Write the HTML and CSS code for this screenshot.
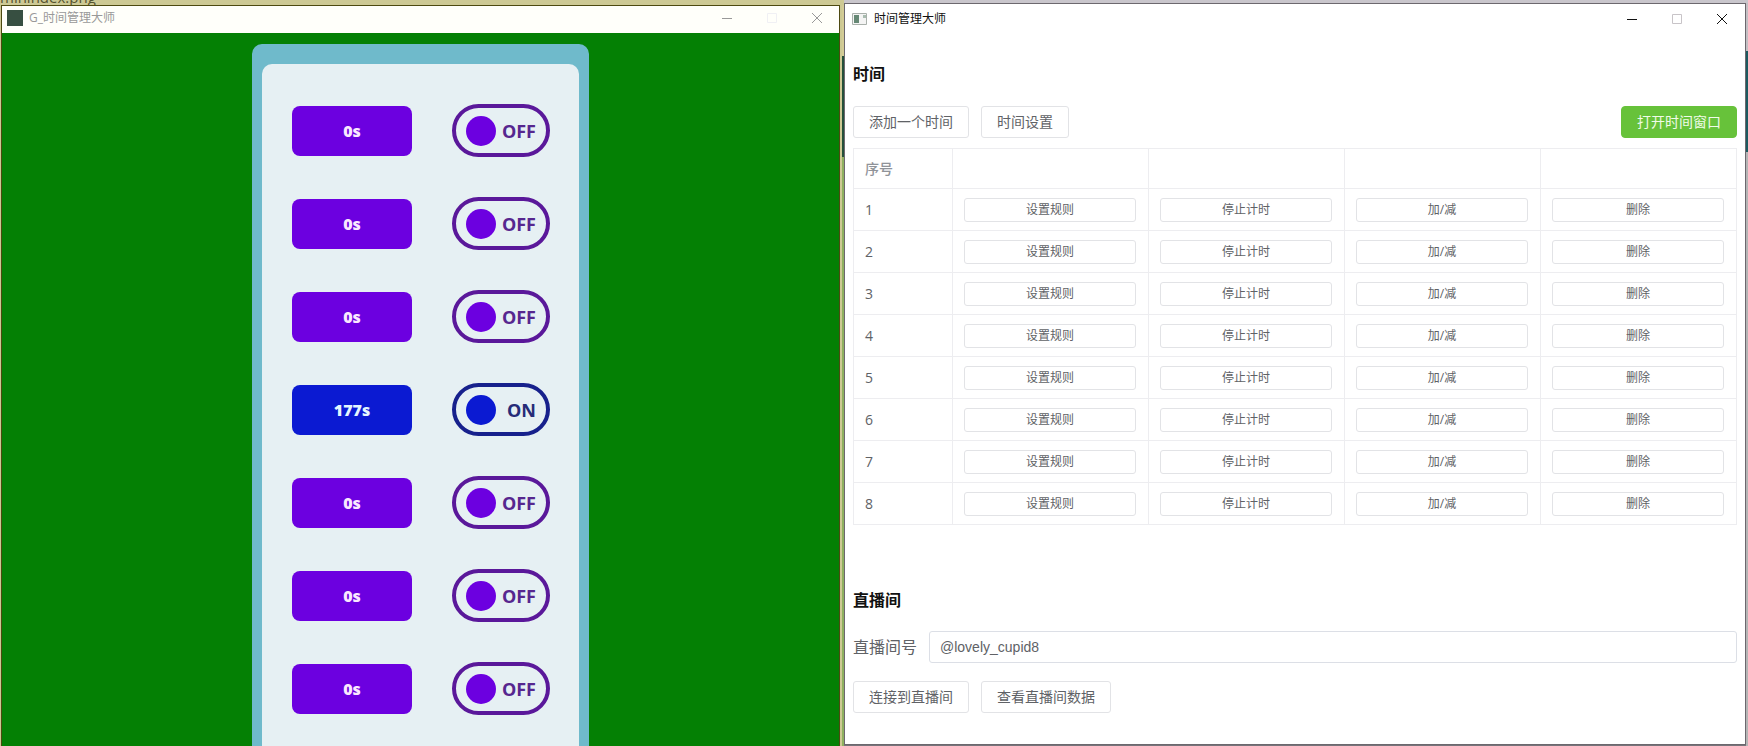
FILE: index.html
```
<!DOCTYPE html>
<html lang="zh-CN">
<head>
<meta charset="utf-8">
<title>时间管理大师</title>
<link rel="stylesheet" href="styles.css">
</head>
<body>
<div class="desktop">
  <span class="behind">minindex.png</span>
  <section class="window timer-window">
    <header class="titlebar inactive">
      <svg class="app-icon" viewBox="0 0 16 16"><rect width="16" height="16" fill="#374f41"/></svg>
      <span class="title">G_时间管理大师</span>
      <button class="win-btn" aria-label="最小化"><svg viewBox="0 0 12 12"><path d="M1 6.500h10"/></svg></button>
      <button class="win-btn dim" aria-label="最大化"><svg viewBox="0 0 12 12"><path d="M1.500 1.500h9v9h-9z"/></svg></button>
      <button class="win-btn" aria-label="关闭"><svg viewBox="0 0 12 12"><path d="M1 1l10 10M11 1L1 11"/></svg></button>
    </header>
    <div class="stage"><div class="panel" id="timers"></div></div>
  </section>
  <section class="window manager-window">
    <header class="titlebar">
      <svg class="app-icon" viewBox="0 0 16 16"><path fill="#f4f4f4" stroke="#a9b0ab" d="M.5 2.500h14v11H.5z"/><path fill="#668875" d="M2 4h5v8H2z"/><path fill="#a9bcb0" d="M11 4h3v3h-3z"/></svg>
      <span class="title">时间管理大师</span>
      <button class="win-btn" aria-label="最小化"><svg viewBox="0 0 12 12"><path d="M1 6.500h10"/></svg></button>
      <button class="win-btn dim" aria-label="最大化"><svg viewBox="0 0 12 12"><path d="M1.500 1.500h9v9h-9z"/></svg></button>
      <button class="win-btn" aria-label="关闭"><svg viewBox="0 0 12 12"><path d="M1 1l10 10M11 1L1 11"/></svg></button>
    </header>
    <main class="content">
      <h2>时间</h2>
      <div class="toolbar">
        <button class="btn">添加一个时间</button>
        <button class="btn">时间设置</button>
        <button class="btn success">打开时间窗口</button>
      </div>
      <table class="grid">
        <colgroup><col class="index-col"><col><col><col><col></colgroup>
        <thead><tr><th>序号</th><th></th><th></th><th></th><th></th></tr></thead>
        <tbody id="rows"></tbody>
      </table>
      <h2 class="room-heading">直播间</h2>
      <div class="field">
        <label for="room">直播间号</label>
        <input id="room" type="text" value="@lovely_cupid8">
      </div>
      <div class="toolbar">
        <button class="btn">连接到直播间</button>
        <button class="btn">查看直播间数据</button>
      </div>
    </main>
  </section>
</div>
<script src="app.js"></script>
</body>
</html>
```
FILE: styles.css
```
* { box-sizing: border-box; }

body {
  margin: 0;
  font-family: "Open Sans", "Noto Sans CJK SC", sans-serif;
  background: #d9d5ac;
}

button, input { font-family: inherit; }

.desktop {
  position: relative;
  display: grid;
  grid-template-columns: 839fr 902fr;
  column-gap: 4px;
  height: 100vh;
  padding: 3px 2px 1px 1px;
  overflow: hidden;
  background:
    linear-gradient(#c9c6cc, #c9c6cc) right top / 904px 3px no-repeat,
    linear-gradient(#c4c0c4 51px, #1c5a60 51px 152px, #b5b5b5 152px) right top / 2px 100% no-repeat,
    linear-gradient(#77747a, #77747a) right bottom / 904px 2px no-repeat,
    linear-gradient(#d3cc96 51px, #24503a 51px 152px, #8fb060 152px) 842px 5px / 3px 100% no-repeat,
    #cdc994;
}

/* Label of the file that lies under the timer window. */
.behind {
  position: absolute;
  left: 0;
  top: -13px;
  font-size: 15px;
  line-height: 20px;
  color: #55532f;
}

.window {
  position: relative;
  display: flex;
  flex-direction: column;
  min-width: 0;
  min-height: 0;
  background: #fff;
  border: 1px solid #6c686e;
}

.timer-window {
  margin-top: 2px;
  margin-bottom: -1px;
  border-color: #4d4a10;
  border-bottom: 0;
}

.titlebar {
  display: flex;
  align-items: center;
  flex: none;
  height: 29px;
  padding: 0 1px 0 7px;
  font-size: 12px;
  line-height: 16px;
  color: #111;
}

.titlebar.inactive { padding: 0 0 4px 5px; color: #999; height: 27px; background: #fffffa; }
.titlebar .title { flex: 1; margin-left: 6px; }
.app-icon { width: 16px; height: 16px; }

.win-btn {
  display: grid;
  place-items: center;
  width: 45px;
  height: 100%;
  padding: 0;
  border: 0;
  background: none;
  color: inherit;
}

.win-btn svg { width: 12px; height: 12px; fill: none; stroke: currentColor; stroke-width: 1; }
.win-btn.dim { color: #c8c4c8; }
.inactive .dim { color: #f0f0f4; }

.stage {
  flex: 1;
  display: flex;
  justify-content: center;
  align-items: flex-start;
  min-height: 0;
  padding-top: 11px;
  overflow: hidden;
  background: #048004;
}

.panel {
  position: relative;
  display: grid;
  gap: 40px;
  padding: 40px 29px 40px 30px;
  background: #6fbacb;
  border: 10px solid #6fbacb;
  border-top-width: 20px;
  border-radius: 10px;
}

.panel::before {
  content: "";
  position: absolute;
  inset: 0;
  border-radius: 10px 10px 0 0;
  background: #e6f0f3;
}

.timer {
  position: relative;
  display: flex;
  align-items: center;
  gap: 40px;
  color: #6c00e0;
}

.timer.on { color: #0b1ad2; }

.time {
  width: 120px;
  height: 50px;
  border-radius: 8px;
  background: currentColor;
  font-size: 16px;
  font-weight: 800;
  line-height: 50px;
  text-align: center;
}

.time span { color: #fbe8ff; }
.on .time span { color: #e4f6ff; }

.switch {
  display: flex;
  align-items: center;
  justify-content: space-between;
  width: 98px;
  height: 53px;
  padding: 0 10px;
  border: 4px solid #5a189a;
  border-radius: 27px;
  background: none;
  color: #56278f;
  font-size: 18px;
  font-weight: 700;
  line-height: 24px;
}

.on .switch { border-color: #17218c; color: #262c78; }
.knob { width: 30px; height: 30px; border-radius: 50%; background: #6c00e0; }
.on .knob { background: #0b1ad2; }

.content { padding: 28px 8px; color: #606266; }

h2 {
  margin: 0 0 19px;
  font-size: 16px;
  line-height: 26px;
  font-weight: 700;
  color: #111;
}

.toolbar { display: flex; gap: 12px; }

.btn {
  height: 32px;
  padding: 0 15px;
  border: 1px solid #e2e3e6;
  border-radius: 3px;
  background: #fff;
  color: #606266;
  font-size: 14px;
  line-height: 20px;
}

.btn.success { margin-left: auto; border-color: #67c23a; border-radius: 4px; background: #67c23a; color: #f0fbe8; }

.grid {
  width: 100%;
  margin-top: 10px;
  border-collapse: collapse;
  table-layout: fixed;
  font-size: 14px;
  line-height: 20px;
}

.index-col { width: 99px; }
.grid th, .grid td { height: 42px; padding: 0 12px 0 11px; border: 1px solid #ededf0; text-align: left; }
.grid th { height: 40px; font-weight: 500; color: #909399; }

.cell-btn {
  display: block;
  width: 100%;
  height: 24px;
  padding: 0;
  border: 1px solid #e2e3e6;
  border-radius: 3px;
  background: #fff;
  color: #606266;
  font-size: 12px;
  line-height: 16px;
}

.room-heading { margin: 62px 0 18px; }
.field { display: flex; align-items: center; gap: 12px; margin-bottom: 18px; font-size: 16px; line-height: 24px; }

.field input {
  flex: 1;
  min-width: 0;
  height: 32px;
  padding: 0 10px;
  border: 1px solid #dcdfe6;
  border-radius: 3px;
  color: #606266;
  font-family: "Liberation Sans", Arial, sans-serif;
  font-size: 14px;
}
```
FILE: app.js
```
const timers = [0, 0, 0, 177, 0, 0, 0, 0];
const actions = ["设置规则", "停止计时", "加/减", "删除"];

document.getElementById("timers").innerHTML = timers.slice(0, 7).map(seconds => `
  <div class="timer${seconds ? " on" : ""}">
    <div class="time"><span>${seconds}s</span></div>
    <button class="switch" aria-pressed="${seconds > 0}"><i class="knob"></i>${seconds ? "ON" : "OFF"}</button>
  </div>`).join("");

document.getElementById("rows").innerHTML = timers.map((_, i) => `
  <tr><td>${i + 1}</td>${actions.map(a => `<td><button class="cell-btn">${a}</button></td>`).join("")}</tr>`).join("");
```
